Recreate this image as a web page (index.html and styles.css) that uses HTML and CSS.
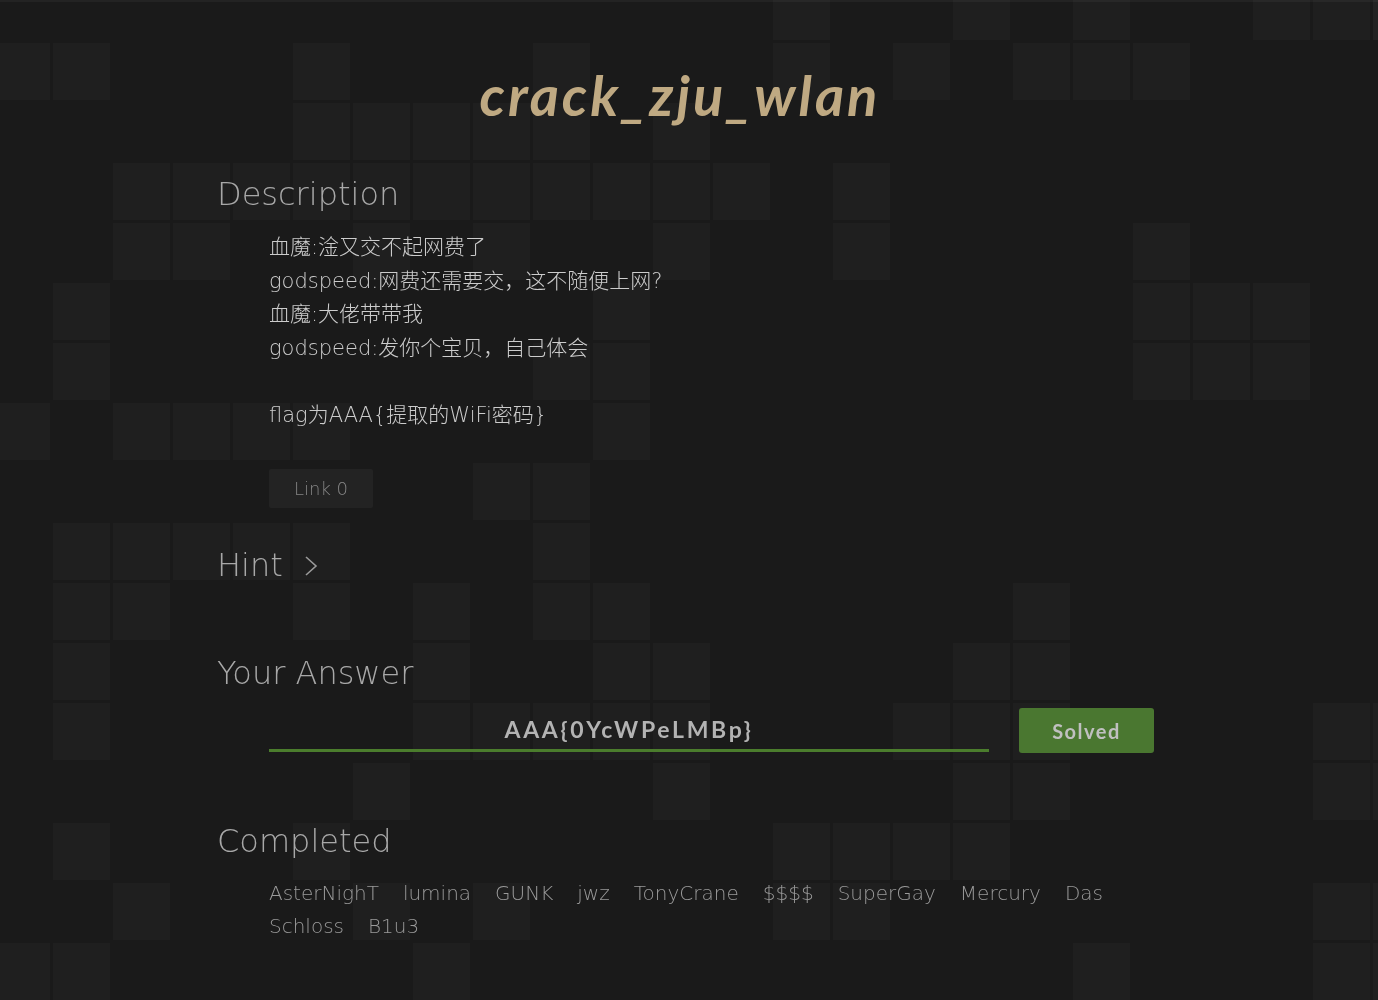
FILE: index.html
```html
<!DOCTYPE html>
<html lang="zh">
<head>
<meta charset="utf-8">
<title>crack_zju_wlan</title>
<link rel="stylesheet" href="styles.css">
</head>
<body>
<div class="bg" aria-hidden="true">
<i></i><i></i><i></i><i></i><i></i><i></i><i></i><i></i><i></i><i></i><i></i><i></i><i></i><i class="o"></i><i></i><i></i><i class="o"></i><i></i><i class="o"></i><i></i><i></i><i class="o"></i><i class="o"></i><i class="o hi"></i>
<i class="o"></i><i class="o"></i><i></i><i></i><i></i><i class="o"></i><i></i><i></i><i></i><i class="o"></i><i></i><i></i><i></i><i class="o"></i><i></i><i class="o"></i><i></i><i class="o"></i><i class="o"></i><i class="o"></i><i></i><i></i><i></i><i></i>
<i></i><i></i><i></i><i></i><i></i><i class="o"></i><i class="o"></i><i class="o"></i><i class="o"></i><i class="o"></i><i></i><i class="o"></i><i></i><i></i><i></i><i></i><i></i><i></i><i></i><i></i><i></i><i></i><i></i><i></i>
<i></i><i></i><i class="o"></i><i class="o"></i><i class="o"></i><i class="o"></i><i class="o"></i><i class="o"></i><i class="o"></i><i class="o"></i><i class="o"></i><i class="o"></i><i class="o"></i><i></i><i class="o"></i><i></i><i></i><i></i><i></i><i></i><i></i><i></i><i></i><i></i>
<i></i><i></i><i class="o"></i><i class="o"></i><i></i><i></i><i class="o"></i><i></i><i class="o"></i><i></i><i></i><i class="o"></i><i></i><i></i><i class="o"></i><i></i><i></i><i></i><i></i><i class="o"></i><i></i><i></i><i></i><i></i>
<i></i><i class="o"></i><i></i><i></i><i></i><i></i><i></i><i></i><i></i><i></i><i class="o"></i><i></i><i></i><i></i><i></i><i></i><i></i><i></i><i></i><i class="o"></i><i class="o"></i><i class="o"></i><i></i><i></i>
<i></i><i class="o"></i><i></i><i></i><i></i><i></i><i></i><i></i><i></i><i class="o"></i><i class="o"></i><i></i><i></i><i></i><i></i><i></i><i></i><i></i><i></i><i class="o"></i><i class="o"></i><i class="o"></i><i></i><i></i>
<i class="o"></i><i></i><i class="o"></i><i class="o"></i><i class="o"></i><i class="o"></i><i></i><i></i><i></i><i></i><i class="o"></i><i></i><i></i><i></i><i></i><i></i><i></i><i></i><i></i><i></i><i></i><i></i><i></i><i></i>
<i></i><i></i><i></i><i></i><i></i><i></i><i></i><i></i><i class="o"></i><i class="o"></i><i></i><i></i><i></i><i></i><i></i><i></i><i></i><i></i><i></i><i></i><i></i><i></i><i></i><i></i>
<i></i><i class="o"></i><i class="o"></i><i class="o"></i><i class="o"></i><i class="o"></i><i></i><i></i><i></i><i class="o"></i><i></i><i></i><i></i><i></i><i></i><i></i><i></i><i></i><i></i><i></i><i></i><i></i><i></i><i></i>
<i></i><i class="o"></i><i class="o"></i><i></i><i></i><i class="o"></i><i></i><i class="o"></i><i></i><i class="o"></i><i class="o"></i><i></i><i></i><i></i><i></i><i></i><i></i><i class="o"></i><i></i><i></i><i></i><i></i><i></i><i></i>
<i></i><i class="o"></i><i></i><i></i><i></i><i></i><i></i><i class="o"></i><i></i><i></i><i class="o"></i><i class="o"></i><i></i><i></i><i></i><i></i><i class="o"></i><i class="o"></i><i></i><i></i><i></i><i></i><i></i><i></i>
<i></i><i class="o"></i><i></i><i></i><i></i><i></i><i></i><i class="o"></i><i class="o"></i><i class="o"></i><i class="o"></i><i class="o"></i><i></i><i></i><i></i><i class="o"></i><i class="o"></i><i class="o"></i><i></i><i></i><i></i><i></i><i class="o"></i><i class="o"></i>
<i></i><i></i><i></i><i></i><i></i><i></i><i class="o"></i><i></i><i></i><i></i><i></i><i class="o"></i><i></i><i></i><i></i><i></i><i class="o"></i><i class="o"></i><i></i><i></i><i></i><i></i><i class="o"></i><i class="o"></i>
<i></i><i class="o"></i><i></i><i></i><i></i><i class="o"></i><i></i><i></i><i></i><i></i><i></i><i></i><i></i><i class="o"></i><i class="o"></i><i class="o"></i><i class="o"></i><i></i><i></i><i></i><i></i><i></i><i></i><i></i>
<i></i><i></i><i class="o"></i><i></i><i></i><i></i><i class="o"></i><i></i><i class="o"></i><i></i><i></i><i></i><i></i><i class="o"></i><i class="o"></i><i></i><i></i><i></i><i></i><i></i><i></i><i></i><i class="o"></i><i class="o"></i>
<i class="o"></i><i class="o"></i><i></i><i></i><i></i><i></i><i></i><i class="o"></i><i></i><i></i><i></i><i></i><i></i><i></i><i></i><i></i><i></i><i></i><i class="o"></i><i></i><i></i><i></i><i class="o"></i><i class="o"></i>
</div>

<main class="wrap">
  <h1 class="title">crack_zju_wlan</h1>

  <section class="sec sec-desc">
    <h2 class="head">Description</h2>
    <div class="indent desc">
      <p>血魔:淦又交不起网费了</p>
      <p>godspeed:网费还需要交，这不随便上网?</p>
      <p>血魔:大佬带带我</p>
      <p>godspeed:发你个宝贝，自己体会</p>
      <p class="blank">&nbsp;</p>
      <p>flag为AAA{提取的WiFi密码}</p>
    </div>
    <div class="indent links">
      <a class="link" href="#">Link 0</a>
    </div>
  </section>

  <section class="sec sec-hint">
    <h2 class="head head-hint">Hint
      <svg class="chev" width="14" height="24" viewBox="0 0 14 24"><polyline points="2,3 12,12 2,21" fill="none" stroke="#9a9a9a" stroke-width="1.6"/></svg>
    </h2>
  </section>

  <section class="sec sec-answer">
    <h2 class="head">Your Answer</h2>
    <div class="indent answer">
      <input class="ans" type="text" value="AAA{0YcWPeLMBp}" readonly>
      <button class="solved" type="button">Solved</button>
    </div>
  </section>

  <section class="sec sec-done">
    <h2 class="head">Completed</h2>
    <ul class="indent names">
      <li>AsterNighT</li>
      <li>lumina</li>
      <li>GUNK</li>
      <li>jwz</li>
      <li>TonyCrane</li>
      <li>$$$$</li>
      <li>SuperGay</li>
      <li>Mercury</li>
      <li>Das</li>
      <li>Schloss</li>
      <li>B1u3</li>
    </ul>
  </section>
</main>
</body>
</html>
```

FILE: styles.css
```css
html, body {
  margin: 0;
  padding: 0;
}

body {
  background: #1a1a1a;
  font-family: "DejaVu Sans", "Noto Sans CJK SC", sans-serif;
  color: #c8c8c8;
  min-height: 1000px;
}

body::before {
  content: "";
  position: fixed;
  top: 0;
  left: 0;
  right: 0;
  height: 2px;
  background: rgba(255, 255, 255, 0.045);
  z-index: 2;
}

/* background tile grid */
.bg {
  position: fixed;
  left: -7px;
  top: -17px;
  display: grid;
  grid-template-columns: repeat(24, 57px);
  grid-auto-rows: 57px;
  gap: 3px;
  z-index: 0;
}

.bg i {
  display: block;
}

.bg i.o {
  background: #1f1f1f;
}

.bg i.hi {
  background: #232323;
}

/* content */
.wrap {
  position: relative;
  z-index: 1;
  width: 944px;
  margin: 0 auto;
  padding-top: 61px;
}

.title {
  margin: 0;
  padding-right: 18px;
  text-align: center;
  font-family: "Lato", sans-serif;
  font-style: italic;
  font-weight: 700;
  font-size: 56px;
  line-height: 67px;
  letter-spacing: 3px;
  color: #bfa982;
}

.head {
  margin: 0;
  font-weight: 200;
  font-size: 32px;
  line-height: 40px;
  color: #a8a8a8;
}

.indent {
  padding-left: 52px;
}

.sec-desc {
  margin-top: 46px;
}

.desc {
  margin-top: 17px;
  font-size: 21px;
  line-height: 33.5px;
  font-weight: 200;
  color: #cccccc;
}

.desc p {
  margin: 0;
}

.links {
  margin-top: 37px;
}

.link {
  display: inline-block;
  height: 39px;
  line-height: 39px;
  padding: 0 25px;
  background: #232323;
  border-radius: 2px;
  color: #858585;
  font-size: 18px;
  font-weight: 200;
  text-decoration: none;
}

.sec-hint {
  margin-top: 37px;
}

.head-hint {
  display: flex;
  align-items: center;
  gap: 21px;
}

.chev {
  display: block;
  margin-top: 2px;
}

.sec-answer {
  margin-top: 68px;
}

.answer {
  margin-top: 15px;
  display: flex;
  align-items: flex-start;
  gap: 30px;
}

.ans {
  box-sizing: border-box;
  width: 720px;
  height: 44px;
  margin: 0;
  padding: 0;
  background: transparent;
  border: none;
  border-bottom: 3px solid #4b7d2d;
  outline: none;
  text-align: center;
  font-family: "Lato", sans-serif;
  font-weight: 700;
  font-size: 23px;
  letter-spacing: 2.7px;
  color: #b3b3b3;
}

.solved {
  width: 135px;
  height: 45px;
  margin: 0;
  padding: 0;
  border: none;
  border-radius: 3px;
  background: #4a7730;
  color: #c0c0c0;
  font-family: "Lato", sans-serif;
  font-weight: 700;
  font-size: 20px;
  letter-spacing: 1.5px;
}

.sec-done {
  margin-top: 68px;
}

.names {
  list-style: none;
  margin: 16px 0 0;
  display: flex;
  flex-wrap: wrap;
  column-gap: 24px;
  font-size: 20px;
  line-height: 33px;
  font-weight: 200;
  color: #9a9a9a;
}

.names li {
  margin: 0;
}
```
